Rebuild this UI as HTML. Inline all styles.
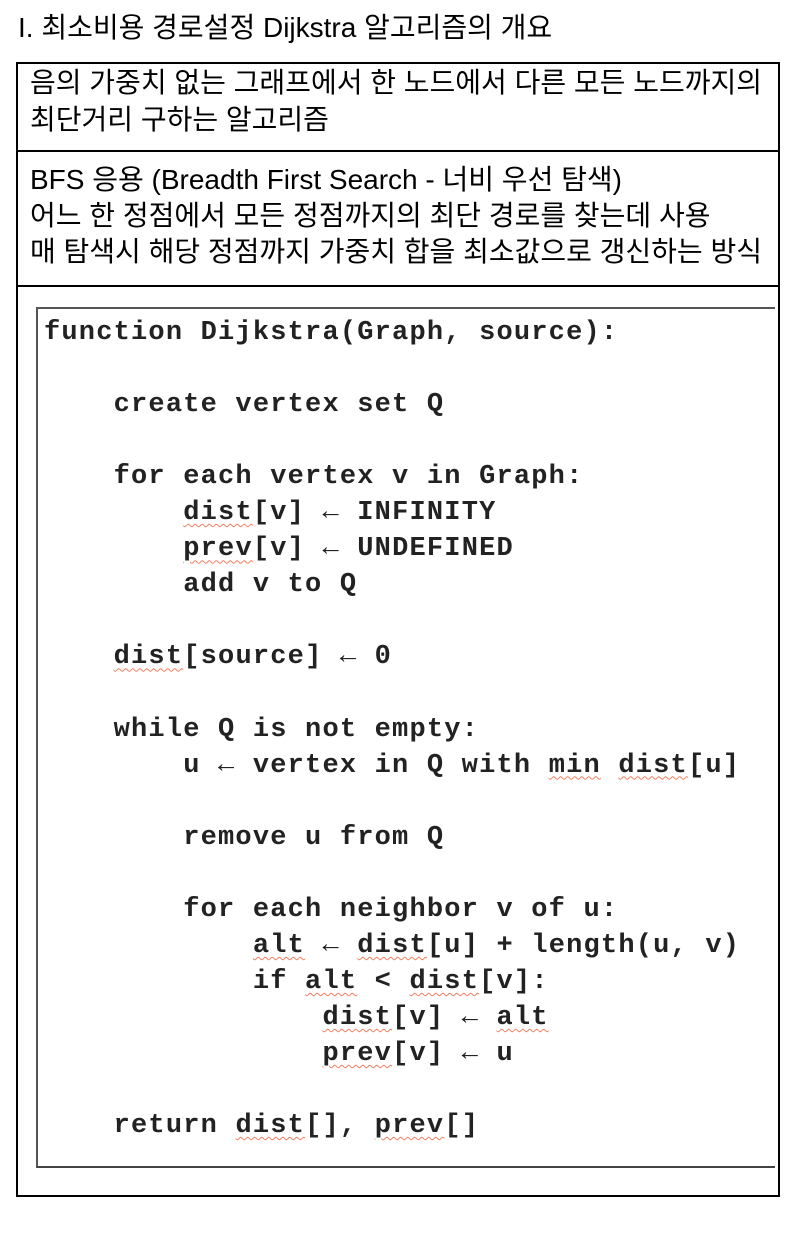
<!DOCTYPE html>
<html><head><meta charset="utf-8"><style>
body{margin:0;background:#fff;width:808px;height:1258px;position:relative;font-family:"Liberation Sans","Noto Sans CJK KR",sans-serif;color:#000}
.t{position:absolute;left:18px;top:12px;font-size:28px;line-height:32px;white-space:nowrap;letter-spacing:0}
.box{position:absolute;left:16px;top:62px;width:760px;height:1131px;border:2px solid #000}
.r1{position:absolute;left:0;top:0;width:760px;height:86px;border-bottom:2px solid #000}
.r2{position:absolute;left:0;top:88px;width:760px;height:133px;border-bottom:2px solid #000}
.txt{position:absolute;left:12px;font-size:28px;line-height:37px;white-space:nowrap;letter-spacing:0}
.img{position:absolute;left:18px;top:243px;width:737px;height:857px;border-left:2px solid #555;border-top:2px solid #555;border-bottom:2px solid #444}
pre{margin:0;position:absolute;left:6px;top:6px;font-family:"Liberation Mono",monospace;font-weight:bold;font-size:27px;line-height:36.05px;letter-spacing:1.2px;color:#222}
u{text-decoration:underline wavy #f08060;text-decoration-thickness:1px;text-underline-offset:4px}
</style></head><body>
<div class="t">I. 최소비용 경로설정 Dijkstra 알고리즘의 개요</div>
<div class="box">
<div class="r1"><div class="txt" style="top:0px">음의 가중치 없는 그래프에서 한 노드에서 다른 모든 노드까지의<br>최단거리 구하는 알고리즘</div></div>
<div class="r2"><div class="txt" style="top:10px;line-height:36px">BFS 응용 (Breadth First Search - 너비 우선 탐색)<br>어느 한 정점에서 모든 정점까지의 최단 경로를 찾는데 사용<br>매 탐색시 해당 정점까지 가중치 합을 최소값으로 갱신하는 방식</div></div>
<div class="img"><pre>function Dijkstra(Graph, source):

    create vertex set Q

    for each vertex v in Graph:
        <u>dist</u>[v] ← INFINITY
        <u>prev</u>[v] ← UNDEFINED
        add v to Q

    <u>dist</u>[source] ← 0

    while Q is not empty:
        u ← vertex in Q with <u>min</u> <u>dist</u>[u]

        remove u from Q

        for each neighbor v of u:
            <u>alt</u> ← <u>dist</u>[u] + length(u, v)
            if <u>alt</u> &lt; <u>dist</u>[v]:
                <u>dist</u>[v] ← <u>alt</u>
                <u>prev</u>[v] ← u

    return <u>dist</u>[], <u>prev</u>[]
</pre></div>
</div>
</body></html>
